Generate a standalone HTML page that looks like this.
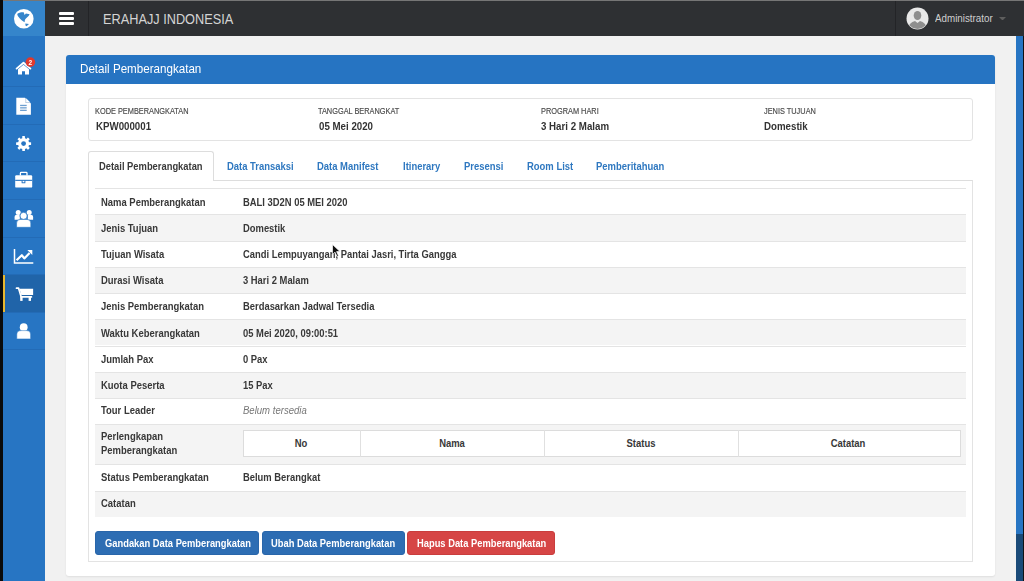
<!DOCTYPE html>
<html><head><meta charset="utf-8">
<style>
*{box-sizing:border-box;margin:0;padding:0}
html,body{width:1024px;height:581px;overflow:hidden;background:#f1f1f1;font-family:"Liberation Sans",sans-serif;color:#333}
#root{position:absolute;left:0;top:0;width:1024px;height:581px;overflow:hidden;filter:blur(.4px)}
.a{position:absolute}
.t{position:absolute;white-space:nowrap;transform-origin:0 0;line-height:1}
.c{transform-origin:50% 0}
#topline{left:0;top:0;width:1024px;height:1px;background:#767676}
#blackl{left:0;top:0;width:3px;height:581px;background:#0a0a0a}
#side{left:3px;top:36px;width:42px;height:545px;background:#2775c3}
#logo{left:3px;top:1px;width:42px;height:35px;background:#3585cb}
#topbar{left:45px;top:1px;width:979px;height:35px;background:#2e3033}
.sep{position:absolute;top:1px;width:1px;height:35px;background:#232427}
.sitem{position:absolute;left:3px;width:42px;border-bottom:1px solid #236bb6}
#rstrip{left:1016px;top:36px;width:7px;height:498px;background:#2775c3}
#rstrip2{left:1016px;top:534px;width:7px;height:47px;background:#1a4a78}
#rblack{left:1023px;top:36px;width:1px;height:545px;background:#111}
#panel{left:66px;top:55px;width:929px;height:521px;background:#fff;border-radius:3px;box-shadow:0 1px 2px rgba(0,0,0,.08)}
#phead{left:66px;top:55px;width:929px;height:28.5px;background:#2674c2;border-radius:3px 3px 0 0}
#info{left:88px;top:98px;width:885px;height:43px;border:1px solid #e3e3e3;border-radius:3px;background:#fff}
#tabc{left:88px;top:180px;width:885px;height:382px;border:1px solid #e3e3e3;border-top:1px solid #ddd}
#tabact{left:88px;top:151px;width:126px;height:30px;border:1px solid #ddd;border-bottom:none;border-radius:3px 3px 0 0;background:#fff}
.row{position:absolute;left:95px;width:871px;border-top:1px solid #e4e4e4}
.g{background:#f4f4f4}
.lab{font-size:10.5px;font-weight:bold;color:#383838;transform:scaleX(.9)}
.val{font-size:10.5px;font-weight:bold;color:#383838;transform:scaleX(.895)}
.tab{font-size:10.5px;font-weight:bold;color:#2f78c0;transform:scaleX(.9)}
.il{font-size:8.2px;color:#4a4a4a;-webkit-text-stroke-width:.15px;transform:scaleX(.9)}
.iv{font-size:10.5px;font-weight:bold;color:#333;transform:scaleX(.925)}
.cc{transform-origin:50% 0;transform:translateX(-50%) scaleX(.9)}
.btn{position:absolute;top:531px;height:24px;border-radius:3px;background:#2d6db3;border:1px solid #2966aa}
.bt{font-size:10.5px;font-weight:bold;color:#fff;transform:scaleX(.89)}
</style></head><body>
<div id="root">
<div class="a" id="topline"></div>
<div class="a" id="topbar"></div>
<div class="sep" style="left:88px"></div>
<div class="sep" style="left:895px"></div>
<div class="a" id="side"></div>
<div class="a" id="logo"></div>
<div class="a" id="blackl"></div>

<!-- globe -->
<svg class="a" style="left:13.8px;top:8.6px" width="20" height="20" viewBox="0 0 20 20">
<circle cx="9.8" cy="9.8" r="9.8" fill="#fff"/>
<path d="M3.2 4.9 C4.5 3.7 6.6 3.1 9.7 3.2 L10.6 5.9 L11.9 4.5 L15.6 5.2 C15 6.8 13.3 8.2 11.9 9.5 C10.9 10.6 10.5 11.9 10.7 13.3 C8.5 12.1 6 10.1 4.6 8.1 C3.9 7.1 3.4 6 3.2 4.9Z" fill="#3585cb"/>
<path d="M11.3 14.6 L15 15 L12.6 17.2 L11.5 16.6Z" fill="#3585cb"/>
</svg>
<!-- hamburger -->
<div class="a" style="left:59px;top:12px;width:15px;height:2.5px;background:#fff;border-radius:1px"></div>
<div class="a" style="left:59px;top:17px;width:15px;height:2.5px;background:#fff;border-radius:1px"></div>
<div class="a" style="left:59px;top:22px;width:15px;height:2.5px;background:#fff;border-radius:1px"></div>
<div class="t" style="left:102.5px;top:11.5px;font-size:14px;color:#d4d4d4;transform:scaleX(.91)">ERAHAJJ INDONESIA</div>

<!-- user -->
<svg class="a" style="left:906px;top:7px" width="23" height="23" viewBox="0 0 23 23">
<defs><clipPath id="cc"><circle cx="11.5" cy="11.5" r="10.5"/></clipPath></defs>
<circle cx="11.5" cy="11.5" r="11" fill="#e8e8e8"/>
<g clip-path="url(#cc)" fill="#8e8e8e">
<ellipse cx="11.5" cy="8.5" rx="3.8" ry="4.6"/>
<path d="M2 23 C2.5 16.5 6 15 9 14 L11.5 16 L14 14 C17 15 20.5 16.5 21 23Z"/>
</g>
</svg>
<div class="t" style="left:935px;top:13px;font-size:11px;color:#cfcfcf;transform:scaleX(.89)">Administrator</div>
<svg class="a" style="left:998.5px;top:16.5px" width="7" height="3.5" viewBox="0 0 7 3.5"><path d="M0 0H7L3.5 3.5Z" fill="#5e5e5e"/></svg>

<!-- right strip -->
<div class="a" id="rstrip"></div>
<div class="a" id="rstrip2"></div>
<div class="a" id="rblack"></div>

<!-- sidebar items -->
<div class="sitem" style="top:36px;height:51px"></div>
<div class="sitem" style="top:87px;height:38px"></div>
<div class="sitem" style="top:125px;height:37px"></div>
<div class="sitem" style="top:162px;height:38px"></div>
<div class="sitem" style="top:200px;height:38px"></div>
<div class="sitem" style="top:238px;height:37px"></div>
<div class="sitem" style="top:275px;height:38px;background:#2064a9"></div>
<div class="sitem" style="top:313px;height:37px"></div>
<div class="a" style="left:3px;top:275px;width:2px;height:37px;background:#e8b830"></div>

<!-- sidebar icons -->
<svg class="a" style="left:0;top:0" width="45" height="360" viewBox="0 0 45 360">
<g fill="#fff">
<!-- home -->
<path d="M16.6 68.6 L23.5 62.7 L30.4 68.6" stroke="#fff" stroke-width="1.9" fill="none" stroke-linecap="round" stroke-linejoin="round"/>
<path d="M18 69.3 L23.5 64.8 L29 69.3 V74.6 H25 V71.3 H22 V74.6 H18Z"/>
<!-- doc -->
<path d="M16.3 97.7 H25 L30.9 103.4 V114.8 H16.3Z"/>
<path d="M25.6 98.2 L30.4 102.9 H25.6Z" fill="#1f5f9f" opacity=".55"/>
<path d="M26.1 98.2 L30.4 102.5 H26.1Z"/>
<rect x="20.1" y="104.8" width="6.6" height="1.3" fill="#6d9fd0"/>
<rect x="20.1" y="107.2" width="6.6" height="1.3" fill="#6d9fd0"/>
<rect x="20.1" y="109.7" width="6.6" height="1.3" fill="#6d9fd0"/>
<!-- gear -->
<g transform="translate(23.6 143.6)">
<circle r="5.6"/>
<rect x="-1.35" y="-7.5" width="2.7" height="15" rx=".5"/>
<rect x="-1.35" y="-7.5" width="2.7" height="15" rx=".5" transform="rotate(45)"/>
<rect x="-1.35" y="-7.5" width="2.7" height="15" rx=".5" transform="rotate(90)"/>
<rect x="-1.35" y="-7.5" width="2.7" height="15" rx=".5" transform="rotate(135)"/>
<circle r="2.4" fill="#2775c3"/>
</g>
<!-- briefcase -->
<path d="M20.4 175.5 V173.2 Q20.4 172.4 21.2 172.4 H26.2 Q27 172.4 27 173.2 V175.5" stroke="#fff" stroke-width="1.3" fill="none"/>
<rect x="15.2" y="175.3" width="17" height="12.3" rx="1.2"/>
<rect x="15.2" y="179.8" width="17" height="1.1" fill="#2775c3"/>
<rect x="21.6" y="180.2" width="3.8" height="3" rx=".5" fill="#2775c3"/>
<rect x="22.6" y="180.9" width="1.8" height="1.4" fill="#fff"/>
<!-- users -->
<circle cx="18.2" cy="212.4" r="2.5"/>
<circle cx="29.2" cy="212.4" r="2.5"/>
<path d="M14.6 219.8 V217.2 Q14.6 214.8 17.2 214.8 H19.8 V219.8Z"/>
<path d="M33.1 219.8 V217.2 Q33.1 214.8 30.5 214.8 H27.8 V219.8Z"/>
<circle cx="23.6" cy="215.9" r="3.6" stroke="#2775c3" stroke-width=".8"/>
<path d="M16.6 227.3 V223 Q16.6 219.4 20.2 219.4 H27 Q30.8 219.4 30.8 223 V227.3Z" stroke="#2775c3" stroke-width=".6"/>
<!-- chart -->
<path d="M14.5 249.1 V262.9 H33.3" stroke="#fff" stroke-width="1.5" fill="none"/>
<path d="M16.6 260.2 L21.8 255.2 L24.3 258.4 L29.6 253" stroke="#fff" stroke-width="2.2" fill="none" stroke-linejoin="round"/>
<path d="M27.3 250.1 H32.3 V255.1Z"/>
<!-- cart -->
<path d="M16.5 288.2 H18.6 L21.2 296.9 H31.4" stroke="#fff" stroke-width="1.7" fill="none" stroke-linejoin="round" stroke-linecap="round"/>
<path d="M19.5 288.8 H33.1 V295 H21.3Z"/>
<rect x="20.2" y="296.3" width="2.4" height="4.6"/>
<rect x="28.6" y="296.3" width="2.4" height="4.6"/>
<!-- user -->
<circle cx="23.7" cy="327.2" r="3.9"/>
<path d="M16.8 338.9 V334.8 Q16.8 330.6 21 330.6 H26.4 Q30.6 330.6 30.6 334.8 V338.9Z" stroke="#2775c3" stroke-width=".5"/>
</g>
<circle cx="30.4" cy="62.1" r="4.8" fill="#e0392d"/>
<text x="30.4" y="64.5" font-family="Liberation Sans" font-size="6.5" font-weight="bold" fill="#fff" text-anchor="middle">2</text>
</svg>

<!-- panel -->
<div class="a" id="panel"></div>
<div class="a" id="phead"></div>
<div class="t" style="left:80px;top:62px;font-size:13px;color:#fff;transform:scaleX(.893)">Detail Pemberangkatan</div>

<div class="a" id="info"></div>
<div class="t il" style="left:95.3px;top:107.7px">KODE PEMBERANGKATAN</div>
<div class="t iv" style="left:95.5px;top:121px">KPW000001</div>
<div class="t il" style="left:318.3px;top:107.7px">TANGGAL BERANGKAT</div>
<div class="t iv" style="left:318.5px;top:121px">05 Mei 2020</div>
<div class="t il" style="left:540.8px;top:107.7px">PROGRAM HARI</div>
<div class="t iv" style="left:541px;top:121px">3 Hari 2 Malam</div>
<div class="t il" style="left:763.8px;top:107.7px">JENIS TUJUAN</div>
<div class="t iv" style="left:764px;top:121px">Domestik</div>

<div class="a" id="tabc"></div>
<div class="a" id="tabact"></div>
<div class="t" style="left:99px;top:161px;font-size:10.5px;font-weight:bold;color:#3a3a3a;transform:scaleX(.892)">Detail Pemberangkatan</div>
<div class="t tab" style="left:226.5px;top:161px">Data Transaksi</div>
<div class="t tab" style="left:317px;top:161px">Data Manifest</div>
<div class="t tab" style="left:403px;top:161px">Itinerary</div>
<div class="t tab" style="left:464px;top:161px">Presensi</div>
<div class="t tab" style="left:527px;top:161px">Room List</div>
<div class="t tab" style="left:596px;top:161px">Pemberitahuan</div>

<!-- table rows -->
<div class="row" style="top:188px;height:26px"></div>
<div class="row g" style="top:214px;height:26.5px"></div>
<div class="row" style="top:240.5px;height:26.3px"></div>
<div class="row g" style="top:266.8px;height:26.2px"></div>
<div class="row" style="top:293px;height:26.3px"></div>
<div class="row g" style="top:319.3px;height:26.2px"></div>
<div class="row" style="top:345.5px;height:26.3px"></div>
<div class="row g" style="top:371.8px;height:26.2px"></div>
<div class="row" style="top:398px;height:26.3px"></div>
<div class="row g" style="top:424.3px;height:40px"></div>
<div class="row" style="top:464.3px;height:26.2px"></div>
<div class="row g" style="top:490.5px;height:26px"></div>

<div class="t lab" style="left:101px;top:196.5px">Nama Pemberangkatan</div>
<div class="t val" style="left:242.5px;top:196.5px">BALI 3D2N 05 MEI 2020</div>
<div class="t lab" style="left:101px;top:222.5px">Jenis Tujuan</div>
<div class="t val" style="left:242.5px;top:222.5px">Domestik</div>
<div class="t lab" style="left:101px;top:248.5px">Tujuan Wisata</div>
<div class="t val" style="left:242.5px;top:248.5px">Candi Lempuyangan, Pantai Jasri, Tirta Gangga</div>
<div class="t lab" style="left:101px;top:274.5px">Durasi Wisata</div>
<div class="t val" style="left:242.5px;top:274.5px">3 Hari 2 Malam</div>
<div class="t lab" style="left:101px;top:301px">Jenis Pemberangkatan</div>
<div class="t val" style="left:242.5px;top:301px">Berdasarkan Jadwal Tersedia</div>
<div class="t lab" style="left:101px;top:327.5px">Waktu Keberangkatan</div>
<div class="t val" style="left:242.5px;top:327.5px">05 Mei 2020, 09:00:51</div>
<div class="t lab" style="left:101px;top:353.5px">Jumlah Pax</div>
<div class="t val" style="left:242.5px;top:353.5px">0 Pax</div>
<div class="t lab" style="left:101px;top:379.5px">Kuota Peserta</div>
<div class="t val" style="left:242.5px;top:379.5px">15 Pax</div>
<div class="t lab" style="left:101px;top:404.5px">Tour Leader</div>
<div class="t" style="left:242.5px;top:404.5px;font-size:10.5px;font-style:italic;color:#777;transform:scaleX(.91)">Belum tersedia</div>
<div class="t lab" style="left:101px;top:431px">Perlengkapan</div>
<div class="t lab" style="left:101px;top:445px">Pemberangkatan</div>
<div class="t lab" style="left:101px;top:471.5px">Status Pemberangkatan</div>
<div class="t val" style="left:242.5px;top:471.5px">Belum Berangkat</div>
<div class="t lab" style="left:101px;top:498px">Catatan</div>

<!-- inner table -->
<div class="a" style="left:242.5px;top:430px;width:718px;height:27px;background:#fff;border:1px solid #dcdcdc"></div>
<div class="a" style="left:360px;top:430px;width:1px;height:27px;background:#e0e0e0"></div>
<div class="a" style="left:543.5px;top:430px;width:1px;height:27px;background:#e0e0e0"></div>
<div class="a" style="left:737.5px;top:430px;width:1px;height:27px;background:#e0e0e0"></div>
<div class="t lab cc" style="left:301.2px;top:437.8px">No</div>
<div class="t lab cc" style="left:451.8px;top:437.8px">Nama</div>
<div class="t lab cc" style="left:640.6px;top:437.8px">Status</div>
<div class="t lab cc" style="left:848.2px;top:437.8px">Catatan</div>

<!-- buttons -->
<div class="btn" style="left:95px;width:164px"></div>
<div class="t bt" style="left:104.5px;top:537.8px">Gandakan Data Pemberangkatan</div>
<div class="btn" style="left:262px;width:143px"></div>
<div class="t bt" style="left:271px;top:537.8px">Ubah Data Pemberangkatan</div>
<div class="btn" style="left:407px;width:148px;background:#d64545;border-color:#c93d3d"></div>
<div class="t bt" style="left:416.5px;top:537.8px">Hapus Data Pemberangkatan</div>

<!-- cursor -->
<svg class="a" style="left:332px;top:244px" width="9" height="13" viewBox="0 0 9 13">
<path d="M0.5 0.5 L0.5 10.5 L3 8.2 L5 12.5 L6.5 11.8 L4.6 7.6 L8 7.6Z" fill="#111" stroke="#fff" stroke-width=".7"/>
</svg>
</div>
</body></html>
